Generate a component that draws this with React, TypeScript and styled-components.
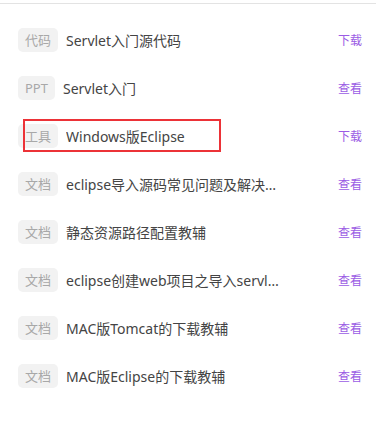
import React from "react";
import styled, { createGlobalStyle } from "styled-components";

const Global = createGlobalStyle`
  html, body { margin: 0; padding: 0; background: #fff; }
  body { font-family: "Noto Sans", "Noto Sans CJK SC", sans-serif; }
`;

const Page = styled.div`
  width: 376px;
  padding-top: 3px;
`;

const Divider = styled.div`
  height: 1px;
  background: #e3e3e3;
`;

const List = styled.ul`
  list-style: none;
  margin: 0;
  padding: 12px 0 0;
`;

const Row = styled.li`
  position: relative;
  height: 48px;
  display: flex;
  align-items: center;
  padding: 0 14px 0 18px;
`;

const Tag = styled.span`
  flex: none;
  height: 24px;
  padding: 0 7px;
  border-radius: 5px;
  background: #f2f2f2;
  color: #a8a8a8;
  font-size: 13px;
  line-height: 24px;
`;

const Title = styled.span`
  flex: 0 1 auto;
  min-width: 0;
  max-width: 215px;
  margin-left: 8px;
  color: #444;
  font-size: 14px;
  white-space: nowrap;
  overflow: hidden;
  text-overflow: ellipsis;
`;

const Action = styled.a`
  margin-left: auto;
  flex: none;
  color: #9b5ce4;
  font-size: 12px;
  text-decoration: none;
`;

const Highlight = styled.div`
  position: absolute;
  left: 23px;
  top: 7px;
  width: 198px;
  height: 33px;
  box-sizing: border-box;
  border: 2px solid #ec3237;
  pointer-events: none;
`;

type Item = { tag: string; title: string; action: string; marked?: boolean };

const items: Item[] = [
  { tag: "代码", title: "Servlet入门源代码", action: "下载" },
  { tag: "PPT", title: "Servlet入门", action: "查看" },
  { tag: "工具", title: "Windows版Eclipse", action: "下载", marked: true },
  { tag: "文档", title: "eclipse导入源码常见问题及解决方法汇总", action: "查看" },
  { tag: "文档", title: "静态资源路径配置教辅", action: "查看" },
  { tag: "文档", title: "eclipse创建web项目之导入servlet-api.jar", action: "查看" },
  { tag: "文档", title: "MAC版Tomcat的下载教辅", action: "查看" },
  { tag: "文档", title: "MAC版Eclipse的下载教辅", action: "查看" },
];

export default function App() {
  return (
    <Page>
      <Global />
      <Divider />
      <List>
        {items.map((it, i) => (
          <Row key={i}>
            <Tag>{it.tag}</Tag>
            <Title>{it.title}</Title>
            <Action href="#">{it.action}</Action>
            {it.marked && <Highlight />}
          </Row>
        ))}
      </List>
    </Page>
  );
}
